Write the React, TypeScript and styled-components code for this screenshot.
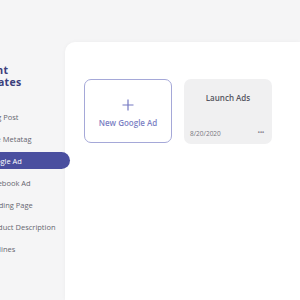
import React from "react";
import styled, { createGlobalStyle } from "styled-components";

const Global = createGlobalStyle`
  html, body { margin: 0; padding: 0; background: #f5f5f6; }
  body { font-family: "Open Sans", "Liberation Sans", sans-serif; overflow: hidden; }
`;

const Page = styled.div`
  display: flex;
  width: 300px;
  height: 300px;
  overflow: hidden;
`;

const Sidebar = styled.aside`
  flex: 0 0 95px;
  margin-left: -30px;
  padding-top: 65px;
  display: flex;
  flex-direction: column;
  position: relative;
  z-index: 1;
`;

const Title = styled.h2`
  margin: 0 0 20px -6px;
  font-size: 10.5px;
  line-height: 11.5px;
  font-weight: 700;
  letter-spacing: 0.3px;
  color: #3b3f7c;
`;

const Menu = styled.nav`
  display: flex;
  flex-direction: column;
  gap: 5px;
`;

const Item = styled.div<{ $active?: boolean }>`
  height: 17px;
  display: flex;
  align-items: center;
  padding-left: 16px;
  margin-right: ${(p) => (p.$active ? "-5px" : "0")};
  border-radius: 0 9px 9px 0;
  font-size: 7.5px;
  white-space: nowrap;
  color: ${(p) => (p.$active ? "#ffffff" : "#666670")};
  background: ${(p) => (p.$active ? "#4a4f9f" : "transparent")};
`;

const Main = styled.main`
  flex: 1;
  margin-top: 42px;
  background: #ffffff;
  border-top-left-radius: 10px;
  box-shadow: 0 0 4px rgba(0, 0, 0, 0.04);
  padding: 37px 0 0 19px;
  display: flex;
  align-items: flex-start;
  gap: 12px;
`;

const NewCard = styled.button`
  box-sizing: border-box;
  width: 88px;
  height: 64px;
  border: 1px solid #a5a8d8;
  border-radius: 7px;
  background: #ffffff;
  display: flex;
  flex-direction: column;
  align-items: center;
  padding: 19px 0 0;
  gap: 6px;
  font-family: inherit;
  cursor: pointer;
`;

const NewLabel = styled.span`
  font-size: 8px;
  font-weight: 600;
  color: #7b7fc4;
  white-space: nowrap;
`;

const TemplateCard = styled.div`
  box-sizing: border-box;
  width: 88px;
  height: 65px;
  border-radius: 7px;
  background: #f0f0f1;
  display: flex;
  flex-direction: column;
  justify-content: space-between;
  padding: 13px 6px 6px;
`;

const CardTitle = styled.div`
  text-align: center;
  font-size: 8px;
  font-weight: 600;
  color: #555560;
`;

const CardFooter = styled.div`
  display: flex;
  justify-content: space-between;
  align-items: center;
  font-size: 6.5px;
  color: #77777f;
`;

const Dots = styled.span`
  font-size: 7px;
  line-height: 6px;
  letter-spacing: -0.5px;
  color: #8a8a92;
  padding: 0 2px 2px 0;
`;

const items = [
  "Blog Post",
  "Title Metatag",
  "Google Ad",
  "Facebook Ad",
  "Landing Page",
  "Product Description",
  "Outlines",
];

export default function App() {
  return (
    <Page>
      <Global />
      <Sidebar>
        <Title>
          Content
          <br />
          Templates
        </Title>
        <Menu>
          {items.map((t) => (
            <Item key={t} $active={t === "Google Ad"}>
              {t}
            </Item>
          ))}
        </Menu>
      </Sidebar>
      <Main>
        <NewCard>
          <svg width="12" height="12" viewBox="0 0 12 12">
            <path d="M6 0.5V11.5M0.5 6H11.5" stroke="#7478c2" strokeWidth="1.2" fill="none" />
          </svg>
          <NewLabel>New Google Ad</NewLabel>
        </NewCard>
        <TemplateCard>
          <CardTitle>Launch Ads</CardTitle>
          <CardFooter>
            <span>8/20/2020</span>
            <Dots>•••</Dots>
          </CardFooter>
        </TemplateCard>
      </Main>
    </Page>
  );
}
